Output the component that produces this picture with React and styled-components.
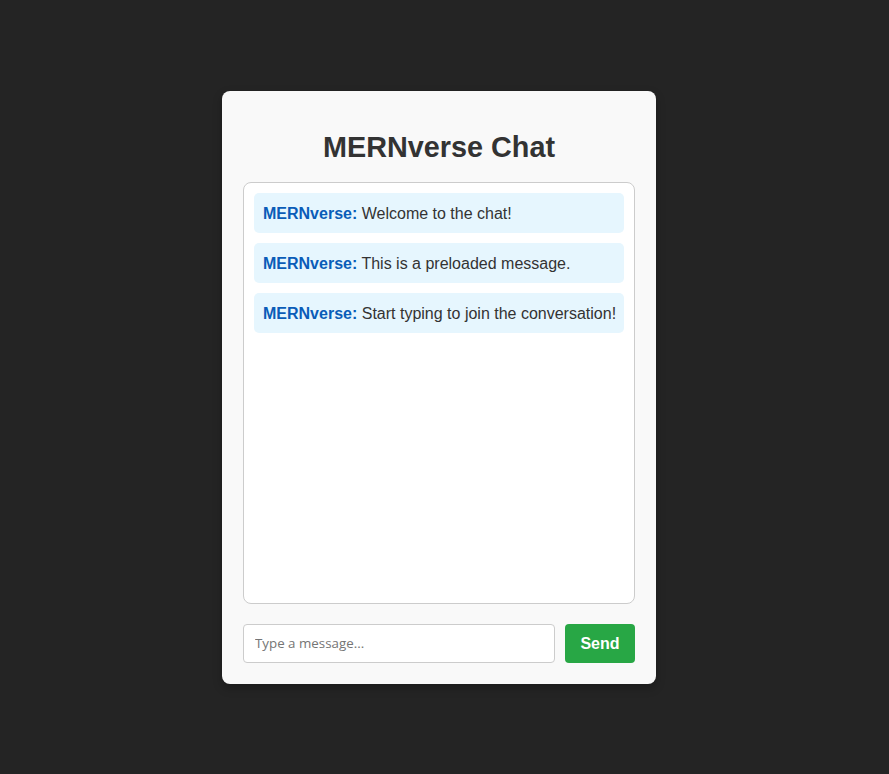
import React, { useState } from "react";
import styled, { createGlobalStyle } from "styled-components";

const GlobalStyle = createGlobalStyle`
  html, body {
    margin: 0;
    padding: 0;
    background-color: #242424;
  }
  body {
    font-family: "Liberation Sans", Arial, sans-serif;
  }
`;

const initialMessages = [
  { user: "MERNverse", text: "Welcome to the chat!" },
  { user: "MERNverse", text: "This is a preloaded message." },
  { user: "MERNverse", text: "Start typing to join the conversation!" },
];

function App() {
  const [messages, setMessages] = useState(initialMessages);
  const [draft, setDraft] = useState("");

  const sendMessage = () => {
    if (!draft.trim()) return;
    setMessages([...messages, { user: "You", text: draft }]);
    setDraft("");
  };

  return (
    <>
      <GlobalStyle />
      <Page>
        <Card>
          <Title>MERNverse Chat</Title>
          <MessageList>
            {messages.map((msg, i) => (
              <Message key={i}>
                <Sender>{msg.user}:</Sender> {msg.text}
              </Message>
            ))}
          </MessageList>
          <InputRow>
            <MessageInput
              type="text"
              placeholder="Type a message..."
              value={draft}
              onChange={(e) => setDraft(e.target.value)}
              onKeyDown={(e) => e.key === "Enter" && sendMessage()}
            />
            <SendButton onClick={sendMessage}>Send</SendButton>
          </InputRow>
        </Card>
      </Page>
    </>
  );
}

const Page = styled.div`
  min-height: 100vh;
  display: flex;
  justify-content: center;
  align-items: center;
  padding-right: 11px;
  box-sizing: border-box;
`;

const Card = styled.div`
  width: 434px;
  box-sizing: border-box;
  padding: 21px;
  background-color: #f9f9f9;
  border-radius: 8px;
  box-shadow: 0 4px 10px rgba(0, 0, 0, 0.25);
`;

const Title = styled.h1`
  margin: 19px 0 18px;
  text-align: center;
  font-size: 28.8px;
  font-weight: bold;
  color: #333;
`;

const MessageList = styled.div`
  height: 422px;
  box-sizing: border-box;
  padding: 10px;
  background-color: #fff;
  border: 1px solid #ccc;
  border-radius: 8px;
  overflow-y: auto;
`;

const Message = styled.div`
  margin-bottom: 10px;
  padding: 11px 6px 9px 9px;
  line-height: 20px;
  font-size: 16px;
  color: #333;
  background-color: #e6f6fe;
  border-radius: 5px;
`;

const Sender = styled.strong`
  color: #0a5cb8;
`;

const InputRow = styled.div`
  display: flex;
  gap: 10px;
  margin-top: 20px;
`;

const MessageInput = styled.input`
  flex: 1;
  padding: 10px 10px 10px 11px;
  font-family: "Open Sans", sans-serif;
  font-size: 13.33px;
  line-height: 17px;
  border: 1px solid #ccc;
  border-radius: 4px;
  outline: none;
  background: #fff;

  &::placeholder {
    color: #757575;
  }
`;

const SendButton = styled.button`
  width: 70px;
  padding: 2px 0 0;
  font-family: "Liberation Sans", Arial, sans-serif;
  font-size: 16px;
  font-weight: bold;
  color: #fff;
  background-color: #28a745;
  border: none;
  border-radius: 4px;
  cursor: pointer;
`;

export default App;
